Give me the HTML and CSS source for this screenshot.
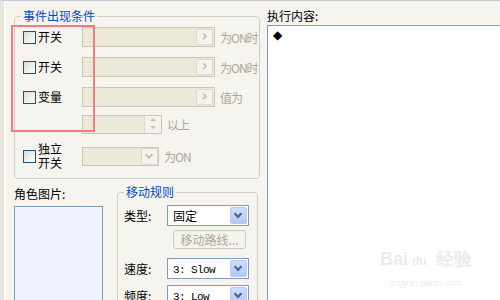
FILE: index.html
```html
<!DOCTYPE html>
<html>
<head>
    <title>事件编辑</title>
    <link rel="stylesheet" href="styles.css">
</head>

<body>
    <div class="window">
        <div class="left">
            <fieldset class="group cond">
                <legend>事件出现条件</legend>

                <div class="row row1">
                    <span class="check"></span><span class="check-label">开关</span>
                    <div class="field wide"><span class="pick">&rsaquo;</span></div>
                    <span class="hint">为ON时</span>
                </div>

                <div class="row row2">
                    <span class="check"></span><span class="check-label">开关</span>
                    <div class="field wide"><span class="pick">&rsaquo;</span></div>
                    <span class="hint">为ON时</span>
                </div>

                <div class="row row3">
                    <span class="check"></span><span class="check-label">变量</span>
                    <div class="field wide"><span class="pick">&rsaquo;</span></div>
                    <span class="hint">值为</span>
                </div>

                <div class="row row4">
                    <span class="spacer"></span>
                    <div class="field spin">
                        <span class="spin-btn"><i class="up"></i><i class="down"></i></span>
                    </div>
                    <span class="hint">以上</span>
                </div>

                <div class="row row5">
                    <span class="check"></span><span class="check-label two">独立<br>开关</span>
                    <div class="field combo"><span class="combo-btn"><i></i></span></div>
                    <span class="hint">为ON</span>
                </div>

                <div class="mark"></div>
            </fieldset>

            <div class="bottom">
                <div class="pic">
                    <div class="label">角色图片:</div>
                    <div class="pic-box"></div>
                </div>

                <fieldset class="group move">
                    <legend>移动规则</legend>

                    <div class="prop">
                        <span class="prop-label">类型:</span>
                        <div class="select"><span class="value">固定</span><span class="drop"><i></i></span></div>
                    </div>

                    <div class="route">
                        <button class="route-btn" disabled>移动路线...</button>
                    </div>

                    <div class="prop">
                        <span class="prop-label">速度:</span>
                        <div class="select"><span class="value mono">3: Slow</span><span class="drop"><i></i></span></div>
                    </div>

                    <div class="prop">
                        <span class="prop-label">频度:</span>
                        <div class="select"><span class="value mono">3: Low</span><span class="drop"><i></i></span></div>
                    </div>
                </fieldset>
            </div>
        </div>

        <div class="right">
            <div class="label">执行内容:</div>
            <div class="content">
                <div class="line">◆</div>
                <div class="watermark">
                    <div class="wm-big">Bai<span class="paw">du</span> 经验</div>
                    <div class="wm-small">jingyan.baidu.com</div>
                </div>
            </div>
        </div>
    </div>
</body>

</html>
```

FILE: styles.css
```css
* {
    box-sizing: border-box;
}

body {
    margin: 0;
    width: 500px;
    height: 300px;
    overflow: hidden;
    background: #f5f4ef;
    font-family: "Noto Sans CJK SC", "DejaVu Sans", sans-serif;
    font-size: 12px;
    color: #000;
}

.window {
    display: flex;
    height: 300px;
    border-top: 1px solid #c4c8d2;
    border-left: 4px solid #e7e5da;
}

.left {
    width: 260px;
    flex-shrink: 0;
    padding-left: 9px;
    border-left: 1px solid #ffffff;
}

/* group boxes */

.group {
    position: relative;
    margin: 0;
    border: 1px solid #d0d0bf;
    border-radius: 4px;
    padding: 0;
}

.group legend {
    margin-left: 6px;
    padding: 0 2px;
    color: #0046d5;
    line-height: 14px;
}

.cond {
    width: 246px;
    height: 170px;
    margin-top: 8px;
}

.row {
    display: flex;
    align-items: center;
    height: 20px;
    padding-left: 8px;
    white-space: nowrap;
}

.row1 {
    margin-top: 4px;
}

.row2,
.row3 {
    margin-top: 10px;
}

.row4 {
    margin-top: 7px;
}

.row5 {
    margin-top: 8px;
    height: 28px;
}

.check {
    flex-shrink: 0;
    width: 13px;
    height: 13px;
    border: 1px solid #1c5180;
    background: linear-gradient(135deg, #dcdcd4, #ffffff);
}

.check-label {
    flex-shrink: 0;
    width: 44px;
    margin-left: 2px;
    line-height: 14px;
}

.spacer {
    flex-shrink: 0;
    width: 59px;
}

.field {
    position: relative;
    flex-shrink: 0;
    height: 20px;
    border: 1px solid #c9c7ba;
    background: #ece9d8;
}

.wide {
    width: 133px;
}

.spin {
    width: 80px;
    height: 19px;
}

.combo {
    width: 77px;
    height: 19px;
}

.pick {
    position: absolute;
    right: 1px;
    top: 1px;
    width: 17px;
    height: 16px;
    border: 1px solid #dcdad0;
    border-radius: 2px;
    background: #f4f3ee;
    color: #c2c0b4;
    font-family: "DejaVu Sans", sans-serif;
    font-size: 15px;
    font-weight: bold;
    line-height: 13px;
    text-align: center;
}

.spin-btn {
    position: absolute;
    right: 0;
    top: 0;
    width: 17px;
    height: 17px;
    display: flex;
    flex-direction: column;
    border-left: 1px solid #dcdad0;
    background: #f4f3ee;
}

.spin-btn i {
    flex: 1;
    position: relative;
}

.spin-btn i::after {
    content: "";
    position: absolute;
    left: 5px;
    top: 2px;
    border-left: 3px solid transparent;
    border-right: 3px solid transparent;
}

.spin-btn .up::after {
    border-bottom: 3px solid #c6c4b8;
}

.spin-btn .down::after {
    border-top: 3px solid #c6c4b8;
}

.combo-btn {
    position: absolute;
    right: 0;
    top: 0;
    width: 17px;
    height: 17px;
    border: 1px solid #dcdad0;
    border-radius: 2px;
    background: #f4f3ee;
}

.combo-btn i,
.drop i {
    position: absolute;
    left: 4px;
    top: 3px;
    width: 6px;
    height: 6px;
    border-right: 2px solid #c6c4b8;
    border-bottom: 2px solid #c6c4b8;
    transform: rotate(45deg);
}

.hint {
    margin-left: 5px;
    color: #aca899;
    letter-spacing: -1px;
}

.mark {
    position: absolute;
    left: -4px;
    top: 2px;
    width: 84px;
    height: 107px;
    border: 2px solid #f27d7d;
}

/* bottom part */

.bottom {
    display: flex;
    gap: 14px;
    margin-top: 8px;
}

.pic {
    width: 89px;
}

.label {
    line-height: 14px;
}

.pic-box {
    height: 110px;
    margin-top: 5px;
    border: 1px solid #7f9db9;
    background: #eef3ff;
}

.move {
    width: 141px;
    height: 130px;
    margin-top: -2px;
}

.prop {
    display: flex;
    align-items: center;
    padding-left: 6px;
    margin-top: 6px;
}

.prop-label {
    width: 43px;
}

.select {
    position: relative;
    width: 82px;
    height: 21px;
    border: 1px solid #7f9db9;
    background: #fff;
}

.value {
    line-height: 19px;
    padding-left: 5px;
}

.mono {
    font-family: "Liberation Mono", monospace;
    font-size: 11px;
    letter-spacing: -0.6px;
}

.drop {
    position: absolute;
    right: 1px;
    top: 1px;
    width: 17px;
    height: 17px;
    border: 1px solid #b9c9ef;
    border-radius: 2px;
    background: linear-gradient(#d0defc, #b3c8f6);
}

.drop i {
    border-color: #4d6185;
}

.route {
    display: flex;
    padding-left: 55px;
    margin-top: 4px;
    margin-bottom: 9px;
}

.route-btn {
    width: 73px;
    height: 19px;
    padding: 0;
    border: 1px solid #cbc9bc;
    border-radius: 3px;
    background: #f4f3ee;
    color: #aca899;
    font-family: inherit;
    font-size: 12px;
}

/* right side */

.right {
    flex: 1;
    padding-left: 3px;
    padding-top: 8px;
}

.content {
    position: relative;
    height: 300px;
    margin-top: 2px;
    margin-right: -4px;
    border: 1px solid #7f9db9;
    background: #fff;
}

.line {
    padding: 3px 0 0 5px;
    line-height: 12px;
    font-size: 12px;
    font-family: "DejaVu Sans", sans-serif;
}

.watermark {
    position: absolute;
    left: 112px;
    top: 222px;
    color: #ececec;
    text-align: center;
}

.wm-big {
    font-family: "Liberation Sans", sans-serif;
    font-size: 18px;
    font-weight: bold;
    line-height: 22px;
}

.paw {
    margin: 0 4px;
    font-size: 12px;
}

.wm-small {
    margin-top: 6px;
    font-family: "Liberation Sans", sans-serif;
    font-size: 9px;
}
```
